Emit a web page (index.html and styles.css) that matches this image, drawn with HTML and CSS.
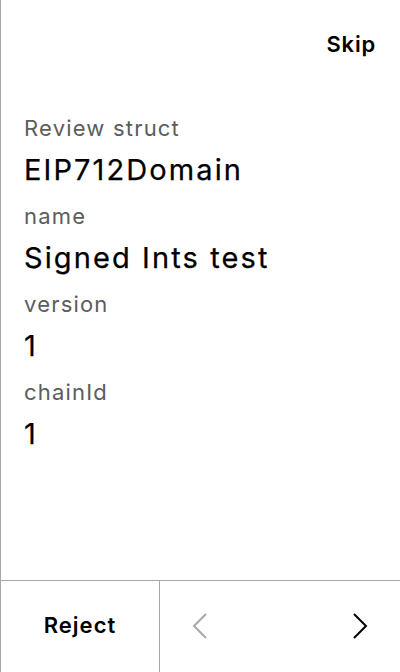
FILE: index.html
```html
<!DOCTYPE html>
<html>
<head>
<meta charset="utf-8">
<link rel="stylesheet" href="styles.css">
</head>
<body>
<div class="screen">
  <header class="header">
    <span class="skip">Skip</span>
  </header>
  <main class="content">
    <div class="label">Review struct</div>
    <div class="value">EIP712Domain</div>
    <div class="label">name</div>
    <div class="value">Signed Ints test</div>
    <div class="label">version</div>
    <div class="value">1</div>
    <div class="label">chainId</div>
    <div class="value">1</div>
  </main>
  <footer class="footer">
    <div class="reject">Reject</div>
    <div class="nav">
      <div class="nav-btn">
        <svg width="16" height="28" viewBox="0 0 16 28"><path d="M14 2 L2 14 L14 26" fill="none" stroke="#a8a8a8" stroke-width="2"/></svg>
      </div>
      <div class="nav-btn">
        <svg width="16" height="28" viewBox="0 0 16 28"><path d="M2 2 L14 14 L2 26" fill="none" stroke="#000" stroke-width="2"/></svg>
      </div>
    </div>
  </footer>
</div>
</body>
</html>
```

FILE: styles.css
```css
html, body {
  margin: 0;
  padding: 0;
  background: #fff;
}
body {
  font-family: Inter, "Noto Sans", sans-serif;
  color: #000;
}
.screen {
  width: 400px;
  height: 672px;
  box-sizing: border-box;
  border-left: 1px solid #a8a8a8;
  display: flex;
  flex-direction: column;
}
.header {
  height: 88px;
  display: flex;
  align-items: center;
  justify-content: flex-end;
  padding-right: 24px;
  box-sizing: border-box;
}
.skip {
  font-size: 22px;
  font-weight: 600;
  line-height: 32px;
  letter-spacing: 0.8px;
}
.content {
  flex: 1;
  padding: 24px 23px 0 23px;
  display: flex;
  flex-direction: column;
}
.label {
  font-size: 22px;
  line-height: 32px;
  color: #5c5c5c;
  letter-spacing: 1.2px;
  margin-bottom: 4px;
}
.value {
  font-size: 29px;
  line-height: 44px;
  letter-spacing: 2.1px;
  -webkit-text-stroke: 0.25px #000;
  margin-bottom: 8px;
}
.footer {
  height: 92px;
  border-top: 1px solid #a8a8a8;
  box-sizing: border-box;
  display: flex;
}
.reject {
  width: 159px;
  border-right: 1px solid #a8a8a8;
  display: flex;
  align-items: center;
  justify-content: center;
  font-size: 22px;
  font-weight: 600;
  letter-spacing: 1px;
  padding-bottom: 4px;
  box-sizing: border-box;
}
.nav {
  flex: 1;
  display: flex;
  justify-content: space-between;
}
.nav-btn {
  width: 80px;
  display: flex;
  align-items: center;
  justify-content: center;
  padding-bottom: 2px;
  box-sizing: border-box;
}
```
